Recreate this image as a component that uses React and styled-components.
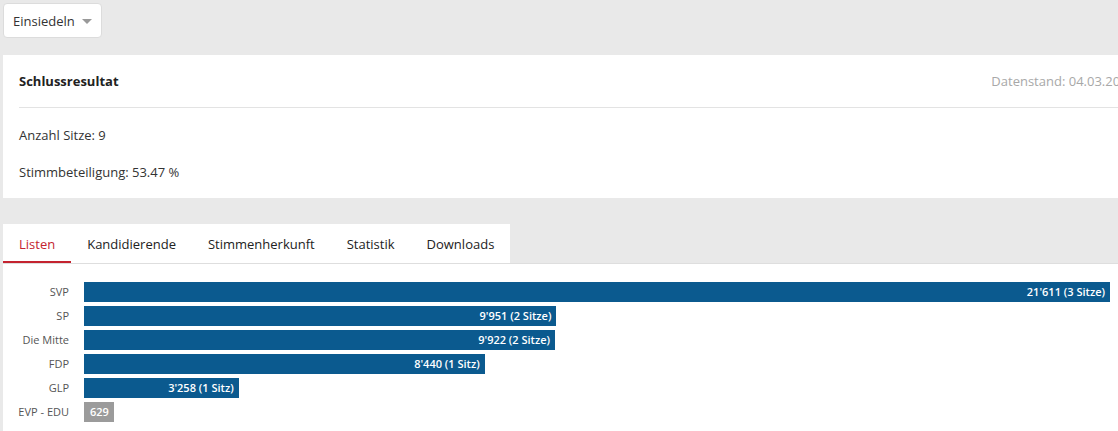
import React from "react";
import styled, { createGlobalStyle } from "styled-components";

const GlobalStyle = createGlobalStyle`
  html, body {
    margin: 0;
    padding: 0;
    background: #e9e9e9;
    overflow: hidden;
  }
  body {
    font-family: "Open Sans", "Liberation Sans", sans-serif;
    color: #222;
  }
  * { box-sizing: border-box; }
`;

const Page = styled.div`
  width: 1151px;
  padding: 3px 0 0 3px;
`;

const Dropdown = styled.button`
  display: inline-flex;
  align-items: center;
  gap: 7px;
  height: 35px;
  padding: 0 9px 0 9px;
  background: #fff;
  border: 1px solid #dcdcdc;
  border-radius: 4px;
  font-family: inherit;
  font-size: 13px;
  color: #333;
`;

const Caret = styled.span`
  width: 0;
  height: 0;
  border-left: 5px solid transparent;
  border-right: 5px solid transparent;
  border-top: 5px solid #999;
  margin-top: 1px;
`;

const Card = styled.section`
  margin-top: 17px;
  background: #fff;
  height: 143px;
`;

const CardHeader = styled.div`
  display: flex;
  justify-content: space-between;
  align-items: center;
  height: 53px;
  margin: 0 0 0 16px;
  padding-right: 16px;
  border-bottom: 1px solid #e3e3e3;
`;

const Title = styled.h2`
  margin: 0;
  font-size: 13px;
  font-weight: 700;
  color: #222;
`;

const Stamp = styled.span`
  font-size: 13px;
  color: #a8a8a8;
`;

const CardBody = styled.div`
  padding: 18px 16px 0 16px;
  display: flex;
  flex-direction: column;
  gap: 19px;
`;

const Info = styled.p`
  margin: 0;
  font-size: 13px;
  line-height: 18px;
  color: #333;
`;

const TabsArea = styled.div`
  margin-top: 26px;
`;

const TabBar = styled.div`
  display: flex;
  border-bottom: 1px solid #dedede;
`;

const TabList = styled.div`
  display: flex;
  background: #fff;
`;

const Tab = styled.div`
  height: 39px;
  padding: 0 16px;
  display: flex;
  align-items: center;
  font-size: 13px;
  color: ${(p) => (p.$active ? "#c4232f" : "#222")};
  border-bottom: 2px solid ${(p) => (p.$active ? "#c4232f" : "transparent")};
  padding-top: 2px;
`;

const Panel = styled.div`
  background: #fff;
  padding: 18px 0 20px 0;
  display: grid;
  grid-template-columns: 66px 1026px;
  column-gap: 15px;
  row-gap: 4px;
`;

const Label = styled.div`
  font-size: 11px;
  color: #555;
  text-align: right;
  height: 20px;
  line-height: 20px;
  white-space: nowrap;
`;

const Track = styled.div`
  height: 20px;
`;

const Bar = styled.div`
  height: 20px;
  background: ${(p) => (p.$muted ? "#9b9b9b" : "#0b5a8f")};
  color: #fff;
  font-size: 11px;
  font-weight: 600;
  line-height: 20px;
  text-align: right;
  padding-right: 5px;
  white-space: nowrap;
  overflow: hidden;
`;

const lists = [
  { name: "SVP", votes: 21611, text: "21'611 (3 Sitze)" },
  { name: "SP", votes: 9951, text: "9'951 (2 Sitze)" },
  { name: "Die Mitte", votes: 9922, text: "9'922 (2 Sitze)" },
  { name: "FDP", votes: 8440, text: "8'440 (1 Sitz)" },
  { name: "GLP", votes: 3258, text: "3'258 (1 Sitz)" },
  { name: "EVP - EDU", votes: 629, text: "629", muted: true },
];

const tabs = ["Listen", "Kandidierende", "Stimmenherkunft", "Statistik", "Downloads"];

export default function App() {
  const max = Math.max(...lists.map((l) => l.votes));
  return (
    <>
      <GlobalStyle />
      <Page>
        <Dropdown>
          Einsiedeln <Caret />
        </Dropdown>
        <Card>
          <CardHeader>
            <Title>Schlussresultat</Title>
            <Stamp>Datenstand: 04.03.2024</Stamp>
          </CardHeader>
          <CardBody>
            <Info>Anzahl Sitze: 9</Info>
            <Info>Stimmbeteiligung: 53.47 %</Info>
          </CardBody>
        </Card>
        <TabsArea>
          <TabBar>
            <TabList>
              {tabs.map((t, i) => (
                <Tab key={t} $active={i === 0}>
                  {t}
                </Tab>
              ))}
            </TabList>
          </TabBar>
          <Panel>
            {lists.map((l) => (
              <React.Fragment key={l.name}>
                <Label>{l.name}</Label>
                <Track>
                  <Bar $muted={l.muted} style={{ width: `${(l.votes / max) * 100}%` }}>
                    {l.text}
                  </Bar>
                </Track>
              </React.Fragment>
            ))}
          </Panel>
        </TabsArea>
      </Page>
    </>
  );
}
